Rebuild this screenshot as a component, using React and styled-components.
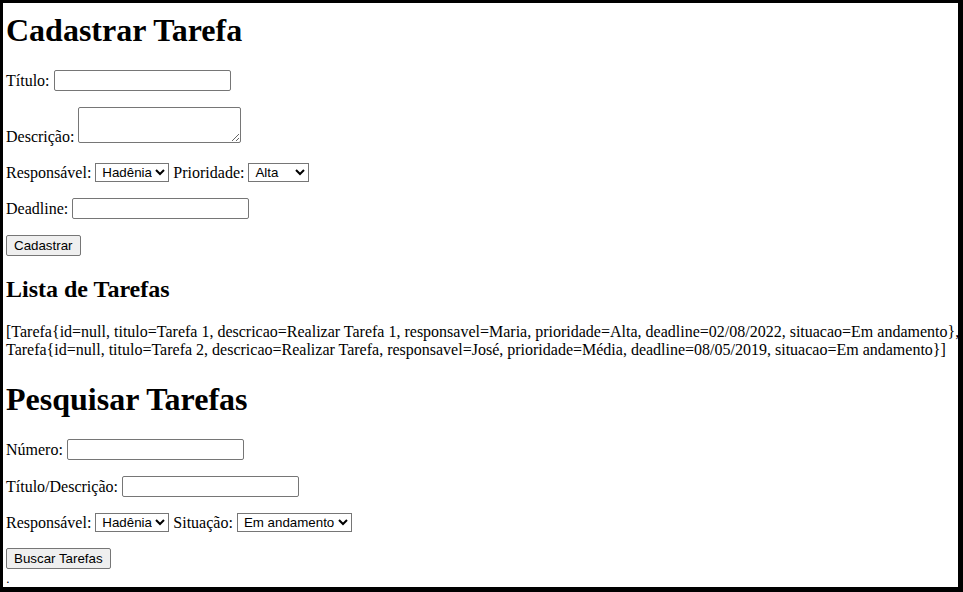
import React from "react";
import styled, { createGlobalStyle } from "styled-components";

const GlobalStyle = createGlobalStyle`
  html, body {
    margin: 0;
    height: 100%;
    background: #000;
  }
  body {
    padding: 3px 5px 5px 3px;
    box-sizing: border-box;
  }
`;

const Page = styled.div`
  background: #fff;
  height: 584px;
  overflow: hidden;
  padding: 0 0 0 3px;
  font-family: "Liberation Serif", "Times New Roman", serif;
  font-size: 16px;
  color: #000;
  box-sizing: border-box;
  display: flow-root;
`;

const Heading = styled.h1`
  font-size: 32px;
  font-weight: bold;
  margin: ${(p) => (p.first ? "9px" : "21.44px")} 0 21.44px;
`;

const SubHeading = styled.h2`
  font-size: 24px;
  font-weight: bold;
  margin: 19.92px 0;
`;

const Field = styled.p`
  margin: 16px 0;
  line-height: ${(p) => p.rowHeight || 21}px;
`;

const controlFont = `
  font-family: "Liberation Sans", Arial, sans-serif;
  font-size: 13.333px;
  box-sizing: border-box;
  vertical-align: top;
`;

const TextInput = styled.input`
  ${controlFont}
  width: 177px;
  height: 21px;
  padding: 1px 2px;
  border: 1px solid #767676;
  border-radius: 2px;
`;

const TextArea = styled.textarea`
  ${controlFont}
  width: 163px;
  height: 36px;
  padding: 2px;
  border: 1px solid #767676;
  border-radius: 2px;
  vertical-align: text-bottom;
  margin: 0 0 2px;
`;

const Select = styled.select`
  ${controlFont}
  color: #000;
  background: #fff;
  border: 1px solid #767676;
  border-radius: 0;
  height: 19px;
  padding: 0 0 0 2px;
  width: ${(p) => p.w}px;
`;

const Button = styled.button`
  ${controlFont}
  color: #000;
  background: #efefef;
  border: 1px solid #767676;
  border-radius: 2px;
  padding: 1px 7px;
  height: 21px;
`;

const ListText = styled.p`
  margin: 16px -12px 16px 0;
`;

const Dot = styled.div`
  font-family: "Liberation Sans", Arial, sans-serif;
  font-size: 13.333px;
  line-height: 10px;
  margin-top: -11px;
`;

const tarefas = [
  "Tarefa{id=null, titulo=Tarefa 1, descricao=Realizar Tarefa 1, responsavel=Maria, prioridade=Alta, deadline=02/08/2022, situacao=Em andamento}",
  "Tarefa{id=null, titulo=Tarefa 2, descricao=Realizar Tarefa, responsavel=José, prioridade=Média, deadline=08/05/2019, situacao=Em andamento}",
];

const responsaveis = ["Hadênia", "Maria", "José"];

export default function App() {
  return (
    <>
      <GlobalStyle />
      <Page>
        <Heading first>Cadastrar Tarefa</Heading>
        <Field>
          Título: <TextInput type="text" />
        </Field>
        <Field>
          Descrição: <TextArea />
        </Field>
        <Field rowHeight={19}>
          Responsável:{" "}
          <Select w={74}>
            {responsaveis.map((r) => (
              <option key={r}>{r}</option>
            ))}
          </Select>{" "}
          Prioridade:{" "}
          <Select w={61}>
            <option>Alta</option>
            <option>Média</option>
            <option>Baixa</option>
          </Select>
        </Field>
        <Field>
          Deadline: <TextInput type="text" />
        </Field>
        <Field>
          <Button>Cadastrar</Button>
        </Field>

        <SubHeading>Lista de Tarefas</SubHeading>
        <ListText>[{tarefas.join(", ")}]</ListText>

        <Heading>Pesquisar Tarefas</Heading>
        <Field>
          Número: <TextInput type="text" />
        </Field>
        <Field>
          Título/Descrição: <TextInput type="text" />
        </Field>
        <Field rowHeight={19}>
          Responsável:{" "}
          <Select w={74}>
            {responsaveis.map((r) => (
              <option key={r}>{r}</option>
            ))}
          </Select>{" "}
          Situação:{" "}
          <Select w={115}>
            <option>Em andamento</option>
            <option>Concluída</option>
          </Select>
        </Field>
        <Field>
          <Button>Buscar Tarefas</Button>
        </Field>
        <Dot>.</Dot>
      </Page>
    </>
  );
}
